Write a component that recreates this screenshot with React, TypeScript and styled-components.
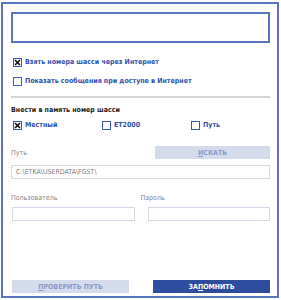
import styled, { createGlobalStyle } from "styled-components";

const GlobalStyle = createGlobalStyle`
  body {
    margin: 0;
    background: #ffffff;
    font-family: "DejaVu Sans Condensed", "DejaVu Sans", sans-serif;
  }
`;

const Panel = styled.div`
  box-sizing: border-box;
  width: 278px;
  height: 296px;
  margin: 2px 0 0 1px;
  border: 2px solid #5874bd;
  padding: 8px 7px 3px 8px;
  display: flex;
  flex-direction: column;
`;

const Display = styled.div`
  box-sizing: border-box;
  height: 31px;
  border: 2px solid #5874bd;
`;

const CheckRow = styled.label<{ top: number }>`
  display: flex;
  align-items: center;
  gap: 3px;
  margin-top: ${(p) => p.top}px;
  margin-left: 2px;
  font-size: 7px;
  font-weight: 700;
  color: #3050a8;
  height: 10px;
  white-space: nowrap;
`;

const Box = styled.span`
  box-sizing: border-box;
  width: 9px;
  height: 9px;
  border: 1px solid #3a5cb4;
  display: inline-flex;
  align-items: center;
  justify-content: center;
  flex: none;
`;

const Separator = styled.div`
  height: 2px;
  background: #d4d4d4;
  margin-top: 10px;
`;

const Heading = styled.div`
  margin-top: 8px;
  font-size: 7px;
  font-weight: 700;
  color: #1a1a1a;
  height: 10px;
`;

const OptionRow = styled.div`
  display: grid;
  grid-template-columns: 89px 89px 1fr;
`;

const FieldRow = styled.div<{ top: number }>`
  display: flex;
  justify-content: space-between;
  align-items: center;
  margin-top: ${(p) => p.top}px;
`;

const Label = styled.div`
  font-size: 7px;
  color: #858585;
  width: 136px;
`;

const Button = styled.div<{ primary?: boolean; w: number }>`
  box-sizing: border-box;
  width: ${(p) => p.w}px;
  height: 13px;
  display: flex;
  align-items: center;
  justify-content: center;
  font-size: 7px;
  font-weight: 700;
  background: ${(p) => (p.primary ? "#2f4d9f" : "#d4dbeb")};
  color: ${(p) => (p.primary ? "#ffffff" : "#8b9bc8")};
  u {
    text-decoration: underline;
  }
`;

const Input = styled.div<{ w?: number }>`
  box-sizing: border-box;
  height: 14px;
  width: ${(p) => (p.w ? `${p.w}px` : "auto")};
  border: 1px solid #d3d9e6;
  font-size: 7px;
  color: #808080;
  padding: 0 0 0 4px;
  display: flex;
  align-items: center;
`;

const Spacer = styled.div`
  flex: 1;
`;

function Check({ checked }: { checked?: boolean }) {
  return (
    <Box>
      {checked && (
        <svg width="7" height="7" viewBox="0 0 7 7">
          <path d="M1 1 L6 6 M6 1 L1 6" stroke="#111" strokeWidth="1.6" />
        </svg>
      )}
    </Box>
  );
}

export default function App() {
  return (
    <>
      <GlobalStyle />
      <Panel>
        <Display />
        <CheckRow top={14}>
          <Check checked />
          Взять номера шасси через Интернет
        </CheckRow>
        <CheckRow top={9}>
          <Check />
          Показать сообщения при доступе в Интернет
        </CheckRow>
        <Separator />
        <Heading>Внести в память номер шасси</Heading>
        <OptionRow>
          <CheckRow top={4}>
            <Check checked />
            Местный
          </CheckRow>
          <CheckRow top={4}>
            <Check />
            ET2000
          </CheckRow>
          <CheckRow top={4}>
            <Check />
            Путь
          </CheckRow>
        </OptionRow>
        <FieldRow top={16}>
          <Label>Путь</Label>
          <Button w={115}>
            <span>
              <u>И</u>СКАТЬ
            </span>
          </Button>
        </FieldRow>
        <Input style={{ marginTop: 6 }}>C:\ETKA\USERDATA\FGST\</Input>
        <FieldRow top={15}>
          <Label>Пользователь</Label>
          <Label>Пароль</Label>
        </FieldRow>
        <FieldRow top={5}>
          <Input w={123} style={{ marginLeft: 1 }} />
          <Input w={122} />
        </FieldRow>
        <Spacer />
        <FieldRow top={0}>
          <Button w={117} style={{ marginLeft: 1 }}>
            <span>
              <u>П</u>РОВЕРИТЬ ПУТЬ
            </span>
          </Button>
          <Button primary w={117}>
            <span>
              ЗА<u>П</u>ОМНИТЬ
            </span>
          </Button>
        </FieldRow>
      </Panel>
    </>
  );
}
